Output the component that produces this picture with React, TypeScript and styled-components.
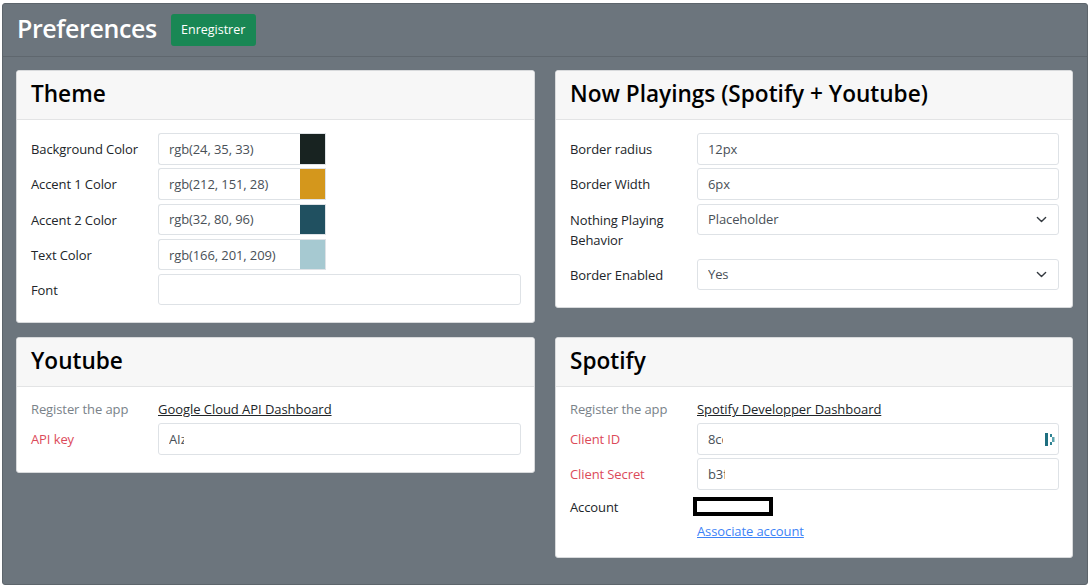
import React from "react";
import styled, { createGlobalStyle } from "styled-components";

const Global = createGlobalStyle`
  html, body { margin: 0; padding: 0; background: #fff; }
  body { font-family: "Open Sans", "Noto Sans", "Liberation Sans", sans-serif; color: #212529; }
  * { box-sizing: border-box; }
`;

const Page = styled.div`
  width: 1090px;
  height: 586px;
  padding: 3px 2px 1px 2px;
`;

const Panel = styled.main`
  height: 100%;
  background: #6c757d;
  border: 1px solid #5d656c;
  border-radius: 3px;
`;

const TopBar = styled.header`
  height: 53px;
  display: flex;
  align-items: center;
  gap: 14px;
  padding: 0 0 4px 14px;
  border-bottom: 1px solid #5f676e;
`;

const PageTitle = styled.h1`
  margin: 0;
  font-size: 25px;
  font-weight: 600;
  letter-spacing: -0.4px;
  color: #fff;
`;

const SaveButton = styled.button`
  width: 85px;
  height: 32px;
  margin-top: 3px;
  border: 0;
  border-radius: 3px;
  background: #198754;
  color: #fff;
  font: 400 12.5px "Open Sans", sans-serif;
`;

const CardGrid = styled.div`
  display: grid;
  grid-template-columns: 519px 518px;
  column-gap: 20px;
  row-gap: 14px;
  align-items: start;
  padding: 13px 0 0 13px;
`;

const Card = styled.section`
  background: #fff;
  border: 1px solid #d8dadc;
  border-radius: 3px;
  overflow: hidden;
`;

const CardHeader = styled.div`
  height: 49px;
  display: flex;
  align-items: center;
  padding: 0 14px 4px 14px;
  background: #f7f7f7;
  border-bottom: 1px solid #e3e4e5;
`;

const CardTitle = styled.h2`
  margin: 0;
  font-size: 22.6px;
  font-weight: 550;
  color: #000;
`;

const CardBody = styled.div<{ $top?: number; $bottom: number }>`
  display: flex;
  flex-direction: column;
  gap: 3.8px;
  padding: ${(p) => p.$top ?? 13.3}px 13px ${(p) => p.$bottom}px 14px;
`;

const Row = styled.div<{ $height?: number }>`
  display: grid;
  grid-template-columns: 127px 1fr;
  min-height: ${(p) => p.$height ?? 31.4}px;
`;

const Label = styled.label<{ $tone?: "muted" | "error" }>`
  padding-top: 6px;
  font-size: 13px;
  line-height: 20px;
  letter-spacing: -0.1px;
  color: ${(p) => (p.$tone === "muted" ? "#7a8289" : p.$tone === "error" ? "#dc4a5a" : "#212529")};
`;

const TextRow = styled(Row)`
  min-height: 20px;
  ${Label} { padding-top: 0; }
`;

const DashLink = styled.a`
  display: block;
  width: fit-content;
  font-size: 13px;
  line-height: 20px;
  letter-spacing: -0.05px;
  color: #212529;
  text-decoration: underline;
`;

const InputGroup = styled.div`
  display: flex;
  height: 31.4px;
`;

const Input = styled.input<{ $clip?: number }>`
  width: 100%;
  height: 31.4px;
  padding: 0 ${(p) => (p.$clip ? 362 - 10 - p.$clip : 10)}px 0 10px;
  background: #fff;
  border: 1px solid #dee2e6;
  border-radius: 3px;
  font: 400 13px "Open Sans", sans-serif;
  letter-spacing: -0.1px;
  color: #495057;
  outline: none;
`;

const ColorInput = styled(Input)`
  width: 142px;
  flex: none;
  border-right: 0;
  border-radius: 3px 0 0 3px;
`;

const Swatch = styled.div<{ $color: string }>`
  width: 26px;
  background: ${(p) => p.$color};
  border: 1px solid #dee2e6;
  border-left: 0;
`;

const FieldOverlay = styled.div`
  position: relative;
  height: 31.4px;
`;

const ManagerIcon = styled.svg`
  position: absolute;
  right: 4px;
  top: 10px;
`;

const Chevron = styled.svg`
  position: absolute;
  right: 12px;
  top: 10px;
  pointer-events: none;
`;

const Select = styled.select`
  appearance: none;
  width: 100%;
  height: 31.4px;
  padding: 0 32px 0 10px;
  background: #fff;
  border: 1px solid #dee2e6;
  border-radius: 3px;
  font: 400 13px "Open Sans", sans-serif;
  letter-spacing: -0.1px;
  color: #495057;
`;

const AccountRow = styled.div`
  display: grid;
  grid-template-columns: 123px 1fr;
  margin-top: 3px;
`;

const AccountLabel = styled(Label)`
  padding: 0;
  line-height: 20px;
`;

const Redaction = styled.div`
  width: 80px;
  height: 19px;
  background: #fff;
  border: 4px solid #000;
`;

const AssociateLink = styled.a`
  display: block;
  width: fit-content;
  margin: 1px 0 0 127px;
  font-size: 13px;
  line-height: 20px;
  letter-spacing: -0.1px;
  color: #3d83f7;
  text-decoration: underline;
`;

const SelectField = ({ value }: { value: string }) => (
  <FieldOverlay>
    <Select defaultValue={value}>
      <option>{value}</option>
    </Select>
    <Chevron width="11" height="11" viewBox="0 0 16 16" fill="none">
      <path d="M2 5l6 6 6-6" stroke="#343a40" strokeWidth="2" strokeLinecap="round" strokeLinejoin="round" />
    </Chevron>
  </FieldOverlay>
);

const themeColors = [
  ["Background Color", "rgb(24, 35, 33)"],
  ["Accent 1 Color", "rgb(212, 151, 28)"],
  ["Accent 2 Color", "rgb(32, 80, 96)"],
  ["Text Color", "rgb(166, 201, 209)"],
];

export default function App() {
  return (
    <Page>
      <Global />
      <Panel>
        <TopBar>
          <PageTitle>Preferences</PageTitle>
          <SaveButton>Enregistrer</SaveButton>
        </TopBar>
        <CardGrid>
          <Card>
            <CardHeader><CardTitle>Theme</CardTitle></CardHeader>
            <CardBody $bottom={17}>
              {themeColors.map(([label, color]) => (
                <Row key={label}>
                  <Label>{label}</Label>
                  <InputGroup>
                    <ColorInput readOnly value={color} />
                    <Swatch $color={color} />
                  </InputGroup>
                </Row>
              ))}
              <Row>
                <Label>Font</Label>
                <Input readOnly value="" />
              </Row>
            </CardBody>
          </Card>
          <Card>
            <CardHeader><CardTitle>Now Playings (Spotify + Youtube)</CardTitle></CardHeader>
            <CardBody $bottom={17}>
              <Row>
                <Label>Border radius</Label>
                <Input readOnly value="12px" />
              </Row>
              <Row>
                <Label>Border Width</Label>
                <Input readOnly value="6px" />
              </Row>
              <Row $height={51.2}>
                <Label>Nothing Playing Behavior</Label>
                <SelectField value="Placeholder" />
              </Row>
              <Row>
                <Label>Border Enabled</Label>
                <SelectField value="Yes" />
              </Row>
            </CardBody>
          </Card>
          <Card>
            <CardHeader><CardTitle>Youtube</CardTitle></CardHeader>
            <CardBody $top={12} $bottom={17}>
              <TextRow>
                <Label $tone="muted">Register the app</Label>
                <DashLink href="#">Google Cloud API Dashboard</DashLink>
              </TextRow>
              <Row>
                <Label $tone="error">API key</Label>
                <Input readOnly value="AIzaSyD0000000000" $clip={16} />
              </Row>
            </CardBody>
          </Card>
          <Card>
            <CardHeader><CardTitle>Spotify</CardTitle></CardHeader>
            <CardBody $top={12} $bottom={16}>
              <TextRow>
                <Label $tone="muted">Register the app</Label>
                <DashLink href="#">Spotify Developper Dashboard</DashLink>
              </TextRow>
              <Row>
                <Label $tone="error">Client ID</Label>
                <FieldOverlay>
                  <Input readOnly value="8cc000000000000" $clip={17} />
                  <ManagerIcon width="10" height="13" viewBox="0 0 10 13">
                    <rect x="0" y="0" width="3" height="13" fill="#1f6f80" />
                    <rect x="5" y="1" width="2" height="3" fill="#2f8292" />
                    <rect x="5" y="9" width="2" height="3" fill="#2f8292" />
                    <rect x="7" y="4" width="2.5" height="5" fill="#5aa3ae" />
                  </ManagerIcon>
                </FieldOverlay>
              </Row>
              <Row>
                <Label $tone="error">Client Secret</Label>
                <Input readOnly value="b3f000000000000" $clip={19} />
              </Row>
              <AccountRow>
                <AccountLabel>Account</AccountLabel>
                <Redaction />
              </AccountRow>
              <AssociateLink href="#">Associate account</AssociateLink>
            </CardBody>
          </Card>
        </CardGrid>
      </Panel>
    </Page>
  );
}
